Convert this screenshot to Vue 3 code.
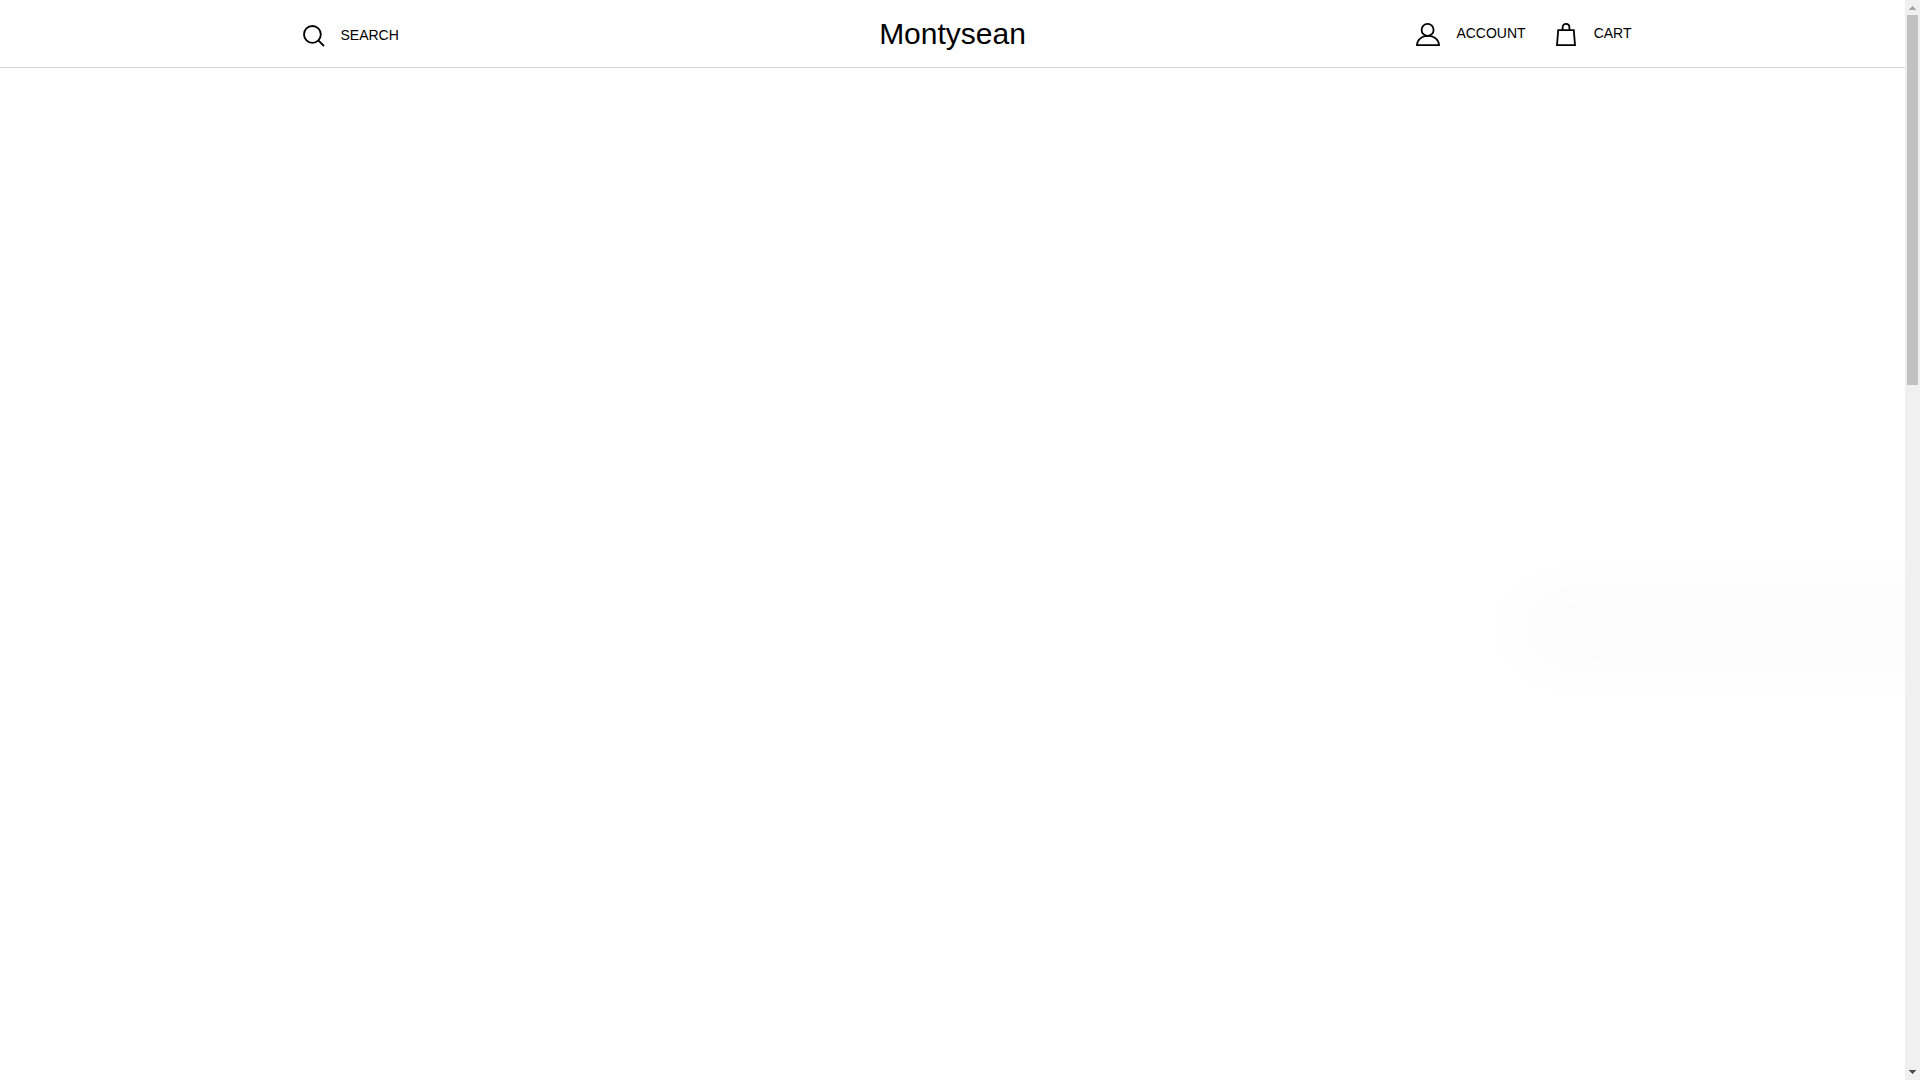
<script setup>
</script>

<template>
  <div class="page">
    <div class="content">
      <header class="header">
        <div class="bar">
          <button class="action search" type="button">
            <svg class="icon" width="22" height="22" viewBox="0 0 22 22" aria-hidden="true">
              <circle cx="9.4" cy="9.4" r="8.4" />
              <path d="M15.3 15.3 21 21" />
            </svg>
            <span>SEARCH</span>
          </button>
          <a class="brand" href="#">Montysean</a>
          <nav class="links">
            <a class="action account" href="#">
              <svg class="icon" width="24" height="24" viewBox="0 0 24 24" aria-hidden="true">
                <circle cx="11.6" cy="6.9" r="6" />
                <path d="M1 22.2C1 17 5.5 12.9 12 12.9S23 17 23 22.2Z" />
              </svg>
              <span>ACCOUNT</span>
            </a>
            <a class="action cart" href="#">
              <svg class="icon" width="20" height="24" viewBox="0 0 20 24" aria-hidden="true">
                <path d="M2.2 7.1H17.8L19 22.2H1Z" />
                <path d="M6.6 7V4.5C6.6 2.4 8.1 .9 10 .9S13.4 2.4 13.4 4.5V7" />
              </svg>
              <span>CART</span>
            </a>
          </nav>
        </div>
      </header>
      <main class="main">
        <div class="glow"></div>
      </main>
    </div>
    <div class="scrollbar" aria-hidden="true">
      <svg class="arrow" width="15" height="15" viewBox="0 0 15 15" shape-rendering="crispEdges">
        <path fill="#a3a3a3" d="M7 6h1v1h1v1h1v1h1v1H4V9h1V8h1V7h1Z" />
      </svg>
      <div class="track"><div class="thumb"></div></div>
      <svg class="arrow" width="15" height="15" viewBox="0 0 15 15" shape-rendering="crispEdges">
        <path fill="#505050" d="M4 5h7v1h-1v1H9v1H8v1H7V8H6V7H5V6H4Z" />
      </svg>
    </div>
  </div>
</template>

<style>
body {
  background: #fff;
}
</style>

<style scoped>
.page {
  display: flex;
  height: 100vh;
  overflow: hidden;
  color: #000;
  font-family: "Liberation Sans", Arial, sans-serif;
}

.content {
  flex: 1;
  min-width: 0;
  display: flex;
  flex-direction: column;
}

.header {
  border-bottom: 1px solid #d4d4d4;
}

.bar {
  display: grid;
  grid-template-columns: 1fr auto 1fr;
  align-items: center;
  max-width: 1360px;
  height: 67px;
  margin: 0 auto;
}

.action {
  display: inline-flex;
  align-items: flex-start;
  padding: 0;
  border: 0;
  background: none;
  color: inherit;
  font: inherit;
  font-size: 14px;
  line-height: 20px;
  text-decoration: none;
  cursor: pointer;
}

.search {
  justify-self: start;
  gap: 16px;
  margin-left: 30px;
  padding-top: 4px;
}

.brand {
  color: inherit;
  font-size: 30px;
  line-height: 40px;
  text-decoration: none;
}

.links {
  display: flex;
  justify-self: end;
  gap: 30px;
  padding-top: 2px;
}

.account {
  gap: 16px;
}

.cart {
  gap: 18px;
  padding-right: 1px;
}

.icon {
  flex: none;
  fill: none;
  stroke: #000;
  stroke-width: 1.8;
}

.main {
  position: relative;
  flex: 1;
  overflow: hidden;
}

/* Sits past the right edge; only its shadow is cast back into view. */
.glow {
  position: absolute;
  top: 551px;
  left: 100%;
  width: 600px;
  height: 20px;
  box-shadow: -382px 0 80px rgba(0, 0, 0, 0.075);
}

.scrollbar {
  flex: none;
  display: flex;
  flex-direction: column;
  width: 15px;
  background: #f0f0f0;
}

.arrow {
  flex: none;
}

.track {
  flex: 1;
  padding: 0 2px;
}

.thumb {
  height: 35.2%;
  background: #c1c1c1;
}
</style>
